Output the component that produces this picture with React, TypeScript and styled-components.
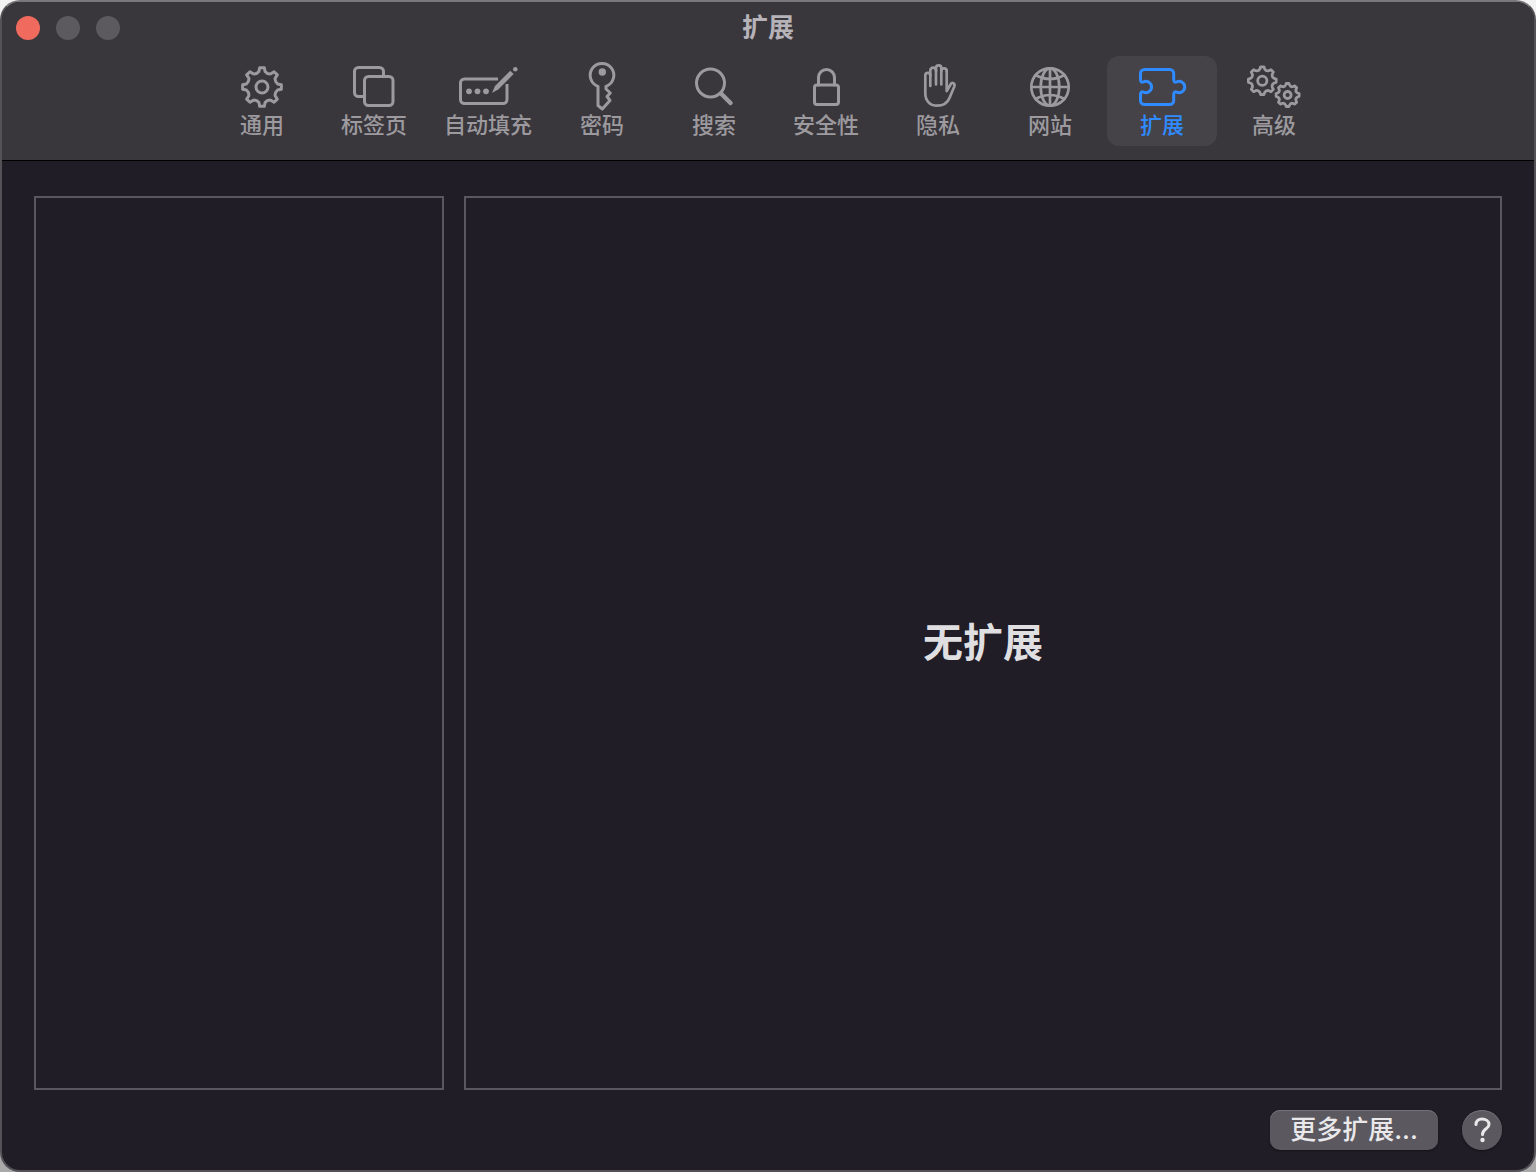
import React, { useState } from "react";
import styled, { createGlobalStyle } from "styled-components";

const GlobalStyle = createGlobalStyle`
  * {
    box-sizing: border-box;
  }
  body {
    margin: 0;
    background: linear-gradient(#f2f2f2, #a9a9a9);
    font-family: Inter, "Noto Sans CJK SC", sans-serif;
  }
  button {
    font-family: inherit;
    border: 0;
    padding: 0;
  }
`;

const Window = styled.main`
  display: flex;
  flex-direction: column;
  min-height: 100vh;
  overflow: hidden;
  border: 2px solid #545257;
  border-top-color: #79777c;
  border-radius: 20px;
  background: #201d26;
`;

const Header = styled.header`
  display: flex;
  flex-direction: column;
  gap: 2px;
  padding-bottom: 14px;
  background: #39363c;
  border-bottom: 1px solid #000;
`;

const TitleBar = styled.div`
  display: grid;
  grid-template-columns: 1fr auto 1fr;
  align-items: center;
  height: 52px;
  padding: 0 14px;
`;

const Lights = styled.div`
  display: flex;
  gap: 16px;
`;

const Light = styled.button<{ $color: string }>`
  width: 24px;
  height: 24px;
  border-radius: 50%;
  background: ${(p) => p.$color};
`;

const Title = styled.h1`
  margin: 0;
  color: #b5b2b8;
  font-size: 26px;
  line-height: 32px;
  font-weight: 700;
`;

const Tabs = styled.nav`
  display: flex;
  justify-content: center;
  gap: 2px;
`;

const Tab = styled.button<{ $active: boolean }>`
  display: flex;
  flex-direction: column;
  align-items: center;
  min-width: 110px;
  height: 90px;
  padding: 6px 13px 8px;
  border-radius: 12px;
  background: ${(p) => (p.$active ? "#454248" : "transparent")};
  color: ${(p) => (p.$active ? "#2f8bff" : "#9c9a9e")};
  font-size: 22px;
  line-height: 26px;
  font-weight: 500;
  white-space: nowrap;
`;

const Icon = styled.svg`
  flex: none;
  width: 60px;
  height: 50px;
  fill: none;
  stroke: currentColor;
  stroke-width: 3;
  stroke-linecap: round;
  stroke-linejoin: round;
  overflow: visible;
`;

const Content = styled.div`
  flex: 1;
  display: flex;
  flex-direction: column;
  gap: 20px;
  padding: 35px 32px 20px;
`;

const Panels = styled.div`
  flex: 1;
  display: grid;
  grid-template-columns: 410px 1fr;
  gap: 20px;
`;

const Panel = styled.section`
  display: flex;
  align-items: center;
  justify-content: center;
  border: 2px solid #5a575e;
`;

const Empty = styled.h2`
  margin: 0;
  color: #dfdee0;
  font-size: 40px;
  line-height: 48px;
  font-weight: 700;
`;

const Footer = styled.footer`
  display: flex;
  justify-content: flex-end;
  gap: 24px;
`;

const PushButton = styled.button<{ $round?: boolean }>`
  display: flex;
  align-items: center;
  justify-content: center;
  width: ${(p) => (p.$round ? "40px" : "168px")};
  height: 40px;
  border-radius: ${(p) => (p.$round ? "50%" : "10px")};
  background: #5b585f;
  box-shadow: inset 0 1px 0 #737077, 0 1px 2px #15131a;
  color: #e9e8ea;
  font-size: 26px;
  line-height: 32px;
  font-weight: 500;
`;

const HelpMark = styled.svg`
  width: 20px;
  height: 28px;
  fill: none;
  stroke: currentColor;
  stroke-width: 3;
  stroke-linecap: round;
`;

/* Outline of a cog: flat-topped teeth joined by rounded valleys. */
function cog(cx: number, cy: number, outer: number, inner: number, teeth: number) {
  const step = (Math.PI * 2) / teeth;
  const at = (r: number, a: number) =>
    `${(cx + r * Math.sin(a)).toFixed(2)} ${(cy - r * Math.cos(a)).toFixed(2)}`;
  let d = "";
  for (let i = 0; i < teeth; i++) {
    const a = i * step;
    d += `${i ? "L" : "M"}${at(outer, a - step * 0.15)}L${at(outer, a + step * 0.15)}`;
    d += `L${at(inner + 1, a + step * 0.25)}`;
    d += `Q${at(inner - 1, a + step * 0.5)} ${at(inner + 1, a + step * 0.75)}`;
  }
  return d + "Z";
}

const icons: Record<string, React.ReactNode> = {
  general: (
    <>
      <path d={cog(30, 25, 19.5, 14.8, 8)} />
      <circle cx="30" cy="25" r="6" />
    </>
  ),
  tabs: (
    <>
      <rect x="20.5" y="14.5" width="28.5" height="29" rx="4" />
      <path d="M20 34.5H14.5a4 4 0 0 1-4-4V9.5a4 4 0 0 1 4-4H35.5a4 4 0 0 1 4 4V14" />
    </>
  ),
  autofill: (
    <>
      <path strokeLinecap="butt" d="M40 17H6.500a4 4 0 0 0-4 4V37.500a4 4 0 0 0 4 4H45a4 4 0 0 0 4-4V22" />
      <g fill="currentColor" stroke="none">
        <circle cx="11" cy="29.300" r="2.900" />
        <circle cx="19.500" cy="29.300" r="2.900" />
        <circle cx="28" cy="29.300" r="2.900" />
        <path d="M34 31L37 24L52.300 8.700L55.700 12L40.500 27.300Z" />
        <circle cx="57.300" cy="7.300" r="2.300" />
      </g>
    </>
  ),
  passwords: (
    <>
      <path d="M26 24.300A11.800 11.800 0 1 1 34 24.300V27L38.300 31L35 34.500L38 38.500L34.800 42L30.300 47L26 43.500Z" />
      <circle cx="30.300" cy="10" r="3.700" fill="currentColor" stroke="none" />
    </>
  ),
  search: (
    <>
      <circle cx="26.500" cy="21" r="14" />
      <path strokeWidth="4.500" d="M37.500 32L46.500 41" />
    </>
  ),
  security: (
    <>
      <rect x="18.500" y="23" width="24" height="19.500" rx="2.500" />
      <path d="M22.500 23V15.500a8 8 0 0 1 16 0V23" />
    </>
  ),
  privacy: (
    <g strokeWidth="2.700">
      <path d="M22.300 24V13.300a2.500 2.500 0 0 0-5 0V31C17.300 39 22 43.700 29 43.700C36 43.700 39.500 41 41.500 36L46.300 24.500C47.500 21 44 19.800 42.500 22.500L38.700 29V8.500" />
      <path d="M22.300 14V8.500a2.800 2.800 0 0 1 5.700 0V22.500" />
      <path d="M28 9V6a2.600 2.600 0 0 1 5.300 0V22.500" />
      <path d="M33.300 9a2.700 2.700 0 0 1 5.400 0" />
    </g>
  ),
  websites: (
    <g strokeWidth="2.700">
      <circle cx="30" cy="25" r="18.700" />
      <ellipse cx="30" cy="25" rx="9.300" ry="18.700" />
      <path d="M30 6.500V43.500M11.500 25H48.500M15.500 13Q30 21 44.500 13M15.500 37Q30 29 44.500 37" />
    </g>
  ),
  extensions: (
    <path d="M8.500 17.500V11.500a4 4 0 0 1 4-4H37.700a4 4 0 0 1 4 4V17.500C41.700 20.500 43 20.500 44.700 19.800A5.700 5.700 0 1 1 44.700 30.200C43 29.500 41.700 29.500 41.700 32.500V38.500a4 4 0 0 1-4 4H12.500a4 4 0 0 1-4-4V32.500C8.500 29.500 9.800 29.500 11.500 30.200A5.700 5.700 0 1 0 11.500 19.800C9.800 20.500 8.500 20.500 8.500 17.500Z" />
  ),
  advanced: (
    <g strokeWidth="2.800">
      <path d={cog(18.3, 18.7, 14, 11, 8)} />
      <circle cx="18.300" cy="18.700" r="4.600" />
      <path d={cog(43.6, 33, 11.6, 9.2, 8)} />
      <circle cx="43.600" cy="33" r="3.500" />
    </g>
  ),
};

const tabs = [
  { id: "general", label: "通用" },
  { id: "tabs", label: "标签页" },
  { id: "autofill", label: "自动填充" },
  { id: "passwords", label: "密码" },
  { id: "search", label: "搜索" },
  { id: "security", label: "安全性" },
  { id: "privacy", label: "隐私" },
  { id: "websites", label: "网站" },
  { id: "extensions", label: "扩展" },
  { id: "advanced", label: "高级" },
];

export default function App() {
  const [active, setActive] = useState("extensions");
  return (
    <>
      <GlobalStyle />
      <Window>
        <Header>
          <TitleBar>
            <Lights>
              <Light $color="#f16a5e" aria-label="关闭" />
              <Light $color="#5c595f" aria-label="最小化" />
              <Light $color="#5c595f" aria-label="缩放" />
            </Lights>
            <Title>扩展</Title>
          </TitleBar>
          <Tabs>
            {tabs.map((t) => (
              <Tab
                key={t.id}
                $active={t.id === active}
                aria-pressed={t.id === active}
                onClick={() => setActive(t.id)}
              >
                <Icon viewBox="0 0 60 50" aria-hidden="true">
                  {icons[t.id]}
                </Icon>
                {t.label}
              </Tab>
            ))}
          </Tabs>
        </Header>
        <Content>
          <Panels>
            <Panel />
            <Panel>
              <Empty>无扩展</Empty>
            </Panel>
          </Panels>
          <Footer>
            <PushButton>更多扩展...</PushButton>
            <PushButton $round aria-label="帮助">
              <HelpMark viewBox="0 0 20 28" aria-hidden="true">
                <path d="M4 8.500C4 5 6.500 3 10 3S17 5 17 8.500C17 13 10.500 12.500 10.500 18.500" />
                <circle cx="10.500" cy="24" r="2.200" fill="currentColor" stroke="none" />
              </HelpMark>
            </PushButton>
          </Footer>
        </Content>
      </Window>
    </>
  );
}
